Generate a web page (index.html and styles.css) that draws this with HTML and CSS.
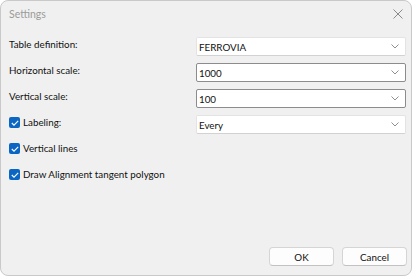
FILE: index.html
```html
<!DOCTYPE html>
<html lang="en">
<head>
  <meta charset="UTF-8">
  <title>Settings</title>
  <link rel="stylesheet" href="styles.css">
</head>
<body>

  <div class="window">
    <div class="titlebar">
      <span class="title">Settings</span>
      <svg class="close" width="10" height="10" viewBox="0 0 10 10">
        <path d="M0.5 0.5 L9.5 9.5 M9.5 0.5 L0.5 9.5" stroke="#8a8a8a" stroke-width="1" fill="none"/>
      </svg>
    </div>

    <div class="form">
      <div class="row">
        <label class="label">Table definition:</label>
        <div class="combo">
          <span>FERROVIA</span>
          <svg class="chev" width="8" height="5" viewBox="0 0 8 5"><path d="M0.5 0.5 L4 4 L7.5 0.5" stroke="#8f8f8f" fill="none"/></svg>
        </div>
      </div>
      <div class="row">
        <label class="label">Horizontal scale:</label>
        <div class="combo edit">
          <span>1000</span>
          <svg class="chev" width="8" height="5" viewBox="0 0 8 5"><path d="M0.5 0.5 L4 4 L7.5 0.5" stroke="#8f8f8f" fill="none"/></svg>
        </div>
      </div>
      <div class="row">
        <label class="label">Vertical scale:</label>
        <div class="combo edit">
          <span>100</span>
          <svg class="chev" width="8" height="5" viewBox="0 0 8 5"><path d="M0.5 0.5 L4 4 L7.5 0.5" stroke="#8f8f8f" fill="none"/></svg>
        </div>
      </div>
      <div class="row">
        <label class="label"><span class="box"><svg width="8" height="6" viewBox="0 0 8 6"><path d="M0.8 3 L3 5.2 L7.2 0.8" stroke="#fff" stroke-width="1.1" fill="none"/></svg></span>Labeling:</label>
        <div class="combo">
          <span>Every</span>
          <svg class="chev" width="8" height="5" viewBox="0 0 8 5"><path d="M0.5 0.5 L4 4 L7.5 0.5" stroke="#8f8f8f" fill="none"/></svg>
        </div>
      </div>
      <div class="row">
        <label class="label"><span class="box"><svg width="8" height="6" viewBox="0 0 8 6"><path d="M0.8 3 L3 5.2 L7.2 0.8" stroke="#fff" stroke-width="1.1" fill="none"/></svg></span>Vertical lines</label>
      </div>
      <div class="row">
        <label class="label"><span class="box"><svg width="8" height="6" viewBox="0 0 8 6"><path d="M0.8 3 L3 5.2 L7.2 0.8" stroke="#fff" stroke-width="1.1" fill="none"/></svg></span>Draw Alignment tangent polygon</label>
      </div>
    </div>

    <div class="buttons">
      <button>OK</button>
      <button>Cancel</button>
    </div>
  </div>

</body>
</html>
```
FILE: styles.css
```css
body {
  margin: 0;
  background: #ffffff;
  font-family: Lato, Roboto, sans-serif;
  font-size: 9.8px;
  color: #111111;
}
.window {
  box-sizing: border-box;
  width: 412px;
  height: 276px;
  background: #f0f0f0;
  border: 1px solid #c9c9c9;
  border-radius: 8px;
  display: flex;
  flex-direction: column;
}
.titlebar {
  height: 26px;
  display: flex;
  align-items: center;
  justify-content: space-between;
  padding: 0 8px 0 8px;
}
.title {
  color: #9b9b9b;
  font-size: 10.5px;
}
.form {
  padding: 10px 5px 0 8px;
  display: flex;
  flex-direction: column;
  gap: 6px;
}
.row {
  height: 20px;
  display: flex;
  justify-content: space-between;
}
.label {
  align-self: flex-start;
  line-height: 15px;
  display: flex;
  align-items: center;
  gap: 3px;
}
.box {
  width: 11px;
  height: 11px;
  border-radius: 2px;
  background: #0a66c2;
  display: flex;
  align-items: center;
  justify-content: center;
}
.combo {
  box-sizing: border-box;
  width: 210px;
  height: 19px;
  background: #ffffff;
  border: 1px solid #e3e3e3;
  border-bottom-color: #d2d2d2;
  border-radius: 2px;
  display: flex;
  align-items: center;
  justify-content: space-between;
  padding: 0 6px 0 2px;
}
.combo.edit {
  border-color: #8c8c8c;
}
.buttons {
  margin-top: auto;
  padding: 0 4px 9px 0;
  display: flex;
  justify-content: flex-end;
  gap: 8px;
}
button {
  width: 65px;
  height: 19px;
  background: #fdfdfd;
  border: 1px solid #d5d5d5;
  border-bottom-color: #c2c2c2;
  border-radius: 4px;
  font-family: inherit;
  font-size: 9.8px;
  color: #111111;
  padding: 0;
}
```
